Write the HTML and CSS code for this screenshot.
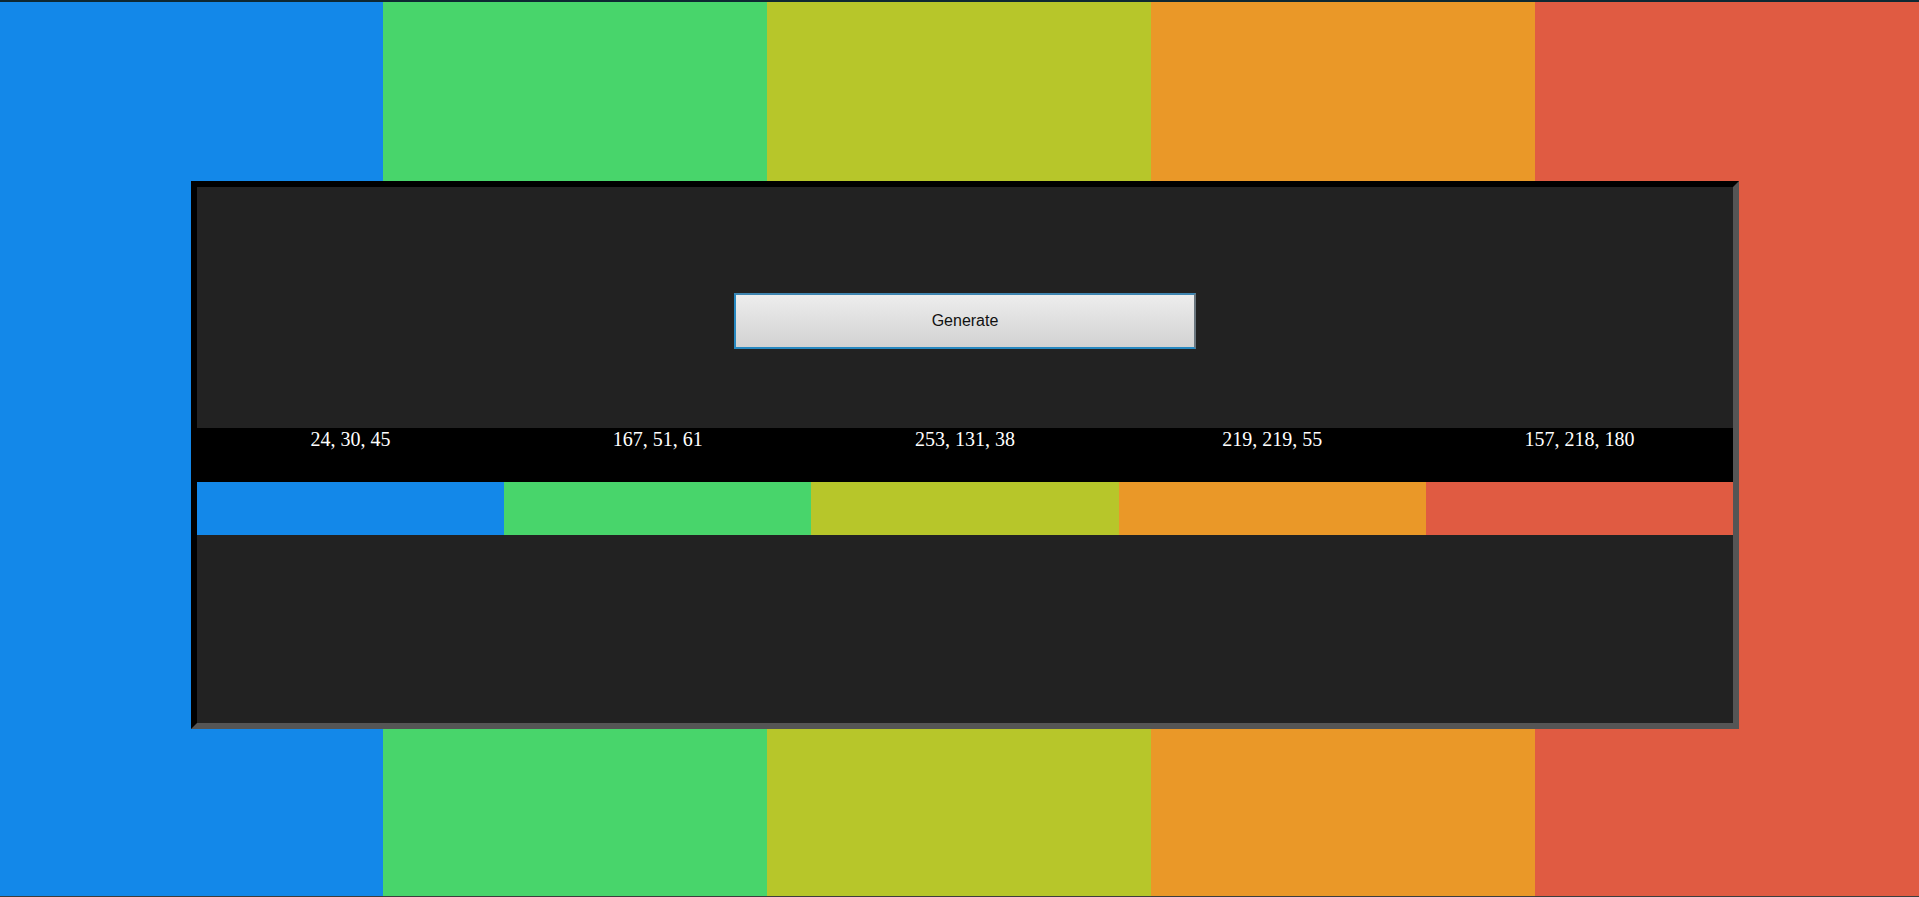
FILE: index.html
```html
<!DOCTYPE html>
<html>
<head>
<meta charset="utf-8">
<title>Palette</title>
<link rel="stylesheet" href="styles.css">
</head>
<body>
<div class="page">
  <div class="stripes">
    <div class="c-blue"></div>
    <div class="c-green"></div>
    <div class="c-olive"></div>
    <div class="c-orange"></div>
    <div class="c-red"></div>
  </div>
  <div class="panel">
    <div class="top">
      <button class="gen">Generate</button>
    </div>
    <div class="labels">
      <span>24, 30, 45</span>
      <span>167, 51, 61</span>
      <span>253, 131, 38</span>
      <span>219, 219, 55</span>
      <span>157, 218, 180</span>
    </div>
    <div class="swatches">
      <div class="c-blue"></div>
      <div class="c-green"></div>
      <div class="c-olive"></div>
      <div class="c-orange"></div>
      <div class="c-red"></div>
    </div>
  </div>
</div>
</body>
</html>
```
FILE: styles.css
```css
html, body {
  margin: 0;
  padding: 0;
}
body {
  width: 1919px;
  height: 897px;
  overflow: hidden;
  background: #222;
}
.page {
  position: relative;
  height: 894px;
  border-top: 2px solid #0e2832;
  border-bottom: 1px solid #3d3d3d;
}
.stripes {
  display: grid;
  grid-template-columns: 383px 384px 384px 384px 384px;
  height: 100%;
}
.c-blue { background: #1388e9; }
.c-green { background: #48d56b; }
.c-olive { background: #b7c62a; }
.c-orange { background: #ea9828; }
.c-red { background: #e05b42; }

.panel {
  position: absolute;
  left: 191px;
  top: 179px;
  width: 1536px;
  height: 536px;
  border: 6px solid;
  border-color: #000 #555 #555 #000;
  background: #222;
  display: flex;
  flex-direction: column;
}
.top {
  display: flex;
  justify-content: center;
  padding-top: 106px;
  padding-bottom: 79px;
}
.gen {
  box-sizing: border-box;
  width: 462px;
  height: 56px;
  margin: 0;
  border: 2px solid #2788c0;
  border-top-color: #3f85b0;
  border-right-color: #6a767e;
  border-radius: 0;
  background: linear-gradient(#ededed, #d2d2d2);
  font-family: "Liberation Sans", Arial, sans-serif;
  font-size: 16px;
  color: #111;
  padding: 0;
}
.labels {
  display: grid;
  grid-template-columns: repeat(5, 1fr);
  height: 54px;
  background: #000;
  color: #fff;
  font-family: "Liberation Serif", "Times New Roman", serif;
  font-size: 20px;
  line-height: 23px;
  text-align: center;
}
.swatches {
  display: flex;
  height: 53px;
}
.swatches > div {
  flex: 1 1 0;
}
```
